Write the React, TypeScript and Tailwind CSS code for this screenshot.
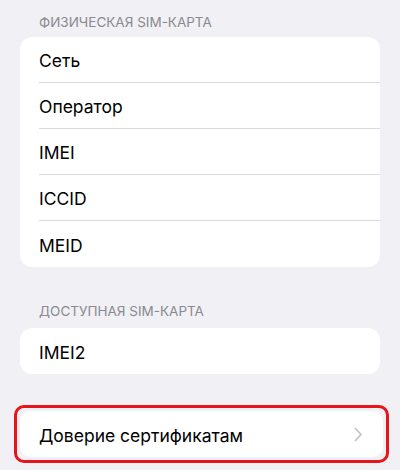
import React from "react";

const font = { fontFamily: "Inter, 'Liberation Sans', sans-serif" };

function Row({ label, last, chevron }: { label: string; last?: boolean; chevron?: boolean }) {
  return (
    <div className="flex h-[46px] items-center pl-[19px]">
      <div className={`flex h-full flex-1 items-center justify-between pt-[3px] pr-[20px] ${last ? "" : "border-b border-[#d9d9de]"}`}>
        <span className="text-[17.5px] text-black leading-none">{label}</span>
        {chevron && (
          <svg width="9" height="15" viewBox="0 0 9 15" className="-mt-[3px]">
            <path d="M1.5 1.5 L7 7.5 L1.5 13.5" fill="none" stroke="#c4c4c8" strokeWidth="1.8" strokeLinecap="round" strokeLinejoin="round" />
          </svg>
        )}
      </div>
    </div>
  );
}

export default function App() {
  return (
    <div className="h-[470px] w-[400px] overflow-hidden bg-[#f0f0f5]" style={font}>
      <div className="px-[20px]">
        <div className="pt-[14px] pl-[19px] text-[13.5px] leading-[16px] text-[#8a8a8f] uppercase">Физическая SIM-карта</div>
        <div className="mt-[7px] overflow-hidden rounded-[12px] bg-white">
          <Row label="Сеть" />
          <Row label="Оператор" />
          <Row label="IMEI" />
          <Row label="ICCID" />
          <Row label="MEID" last />
        </div>
        <div className="mt-[36px] pl-[19px] text-[13.5px] leading-[16px] text-[#8a8a8f] uppercase">Доступная SIM-карта</div>
        <div className="mt-[9px] overflow-hidden rounded-[12px] bg-white">
          <Row label="IMEI2" last />
        </div>
      </div>
      <div className="mt-[31px] ml-[14px] w-[375px] rounded-[10px] border-[3px] border-[#e8141c] px-[3px] py-[3px]">
        <div className="overflow-hidden rounded-[10px] bg-white">
          <Row label="Доверие сертификатам" last chevron />
        </div>
      </div>
    </div>
  );
}
